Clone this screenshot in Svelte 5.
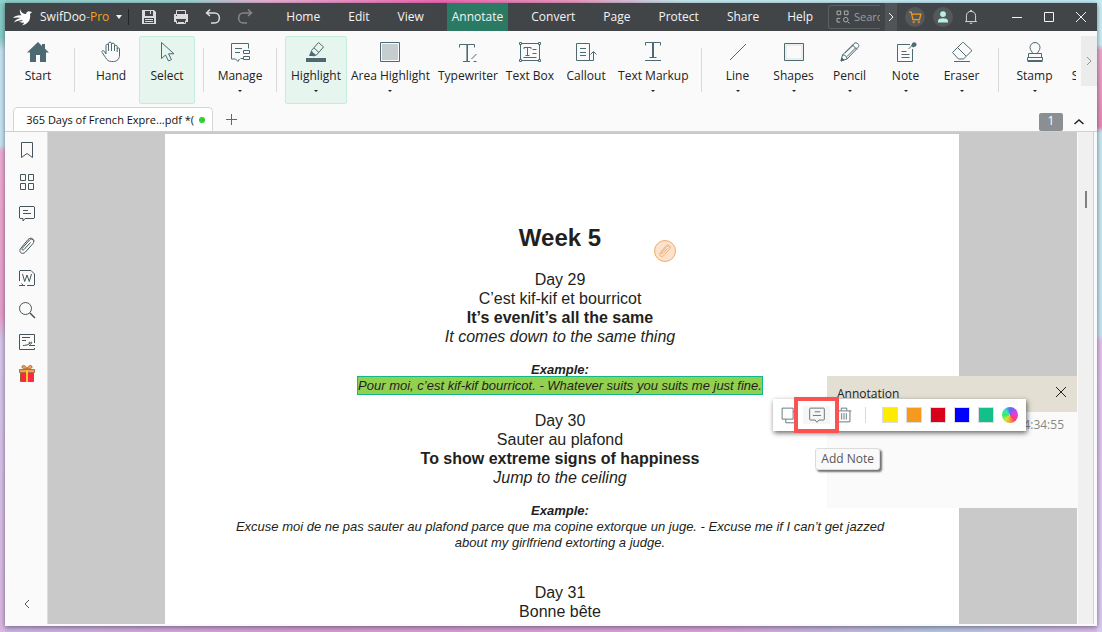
<script lang="ts">
	type Tool = { name: string; icon?: string; menu?: boolean; active?: boolean };

	const menus = ['Home', 'Edit', 'View', 'Annotate', 'Convert', 'Page', 'Protect', 'Share', 'Help'];
	let activeMenu = $state('Annotate');

	const groups: Tool[][] = [
		[{ name: 'Start', icon: 'start' }],
		[
			{ name: 'Hand', icon: 'hand' },
			{ name: 'Select', icon: 'select', active: true }
		],
		[{ name: 'Manage', icon: 'manage', menu: true }],
		[
			{ name: 'Highlight', icon: 'highlight', menu: true, active: true },
			{ name: 'Area Highlight', icon: 'area', menu: true },
			{ name: 'Typewriter', icon: 'typewriter' },
			{ name: 'Text Box', icon: 'textbox' },
			{ name: 'Callout', icon: 'callout' },
			{ name: 'Text Markup', icon: 'markup', menu: true }
		],
		[
			{ name: 'Line', icon: 'line', menu: true },
			{ name: 'Shapes', icon: 'shapes', menu: true },
			{ name: 'Pencil', icon: 'pencil', menu: true },
			{ name: 'Note', icon: 'note', menu: true },
			{ name: 'Eraser', icon: 'eraser', menu: true }
		],
		[
			{ name: 'Stamp', icon: 'stamp', menu: true },
			{ name: 'Sticker' }
		]
	];

	const sidebar = [
		{ name: 'Bookmarks', icon: 'bookmark' },
		{ name: 'Thumbnails', icon: 'grid' },
		{ name: 'Annotations', icon: 'comment' },
		{ name: 'Attachments', icon: 'clip' },
		{ name: 'Word', icon: 'word' },
		{ name: 'Find', icon: 'find' },
		{ name: 'Signatures', icon: 'sign' },
		{ name: 'Gift', icon: 'gift' }
	];

	const swatches = [
		{ name: 'Yellow', color: '#ffeb00' },
		{ name: 'Orange', color: '#f7991c' },
		{ name: 'Red', color: '#d9001b' },
		{ name: 'Blue', color: '#0000ff' },
		{ name: 'Green', color: '#13c08a' }
	];

	// every icon is drawn in a 24 x 24 box
	const icons: Record<string, string> = {
		start:
			'<path fill="currentColor" stroke="none" d="M12 2 1 12.500h3V22h6v-7h4v7h6v-9.500h3L19 8.800V4h-3v2z"/>',
		hand: '<path d="M7 14V5.500c0-1.800 2.500-1.800 2.500 0V11M9.500 6V3.500c0-1.800 3-1.800 3 0V11M12.500 4.500c0-1.800 3-1.800 3 0V11M15.500 6.500c0-1.700 2.700-1.700 2.700 0V12M18.200 9c0-1.500 2.300-1.500 2.300 0v6c0 4-2.500 6.500-6 6.500h-2c-3 0-4.500-1.500-6-4L3.200 12.500c-1-1.800 1-2.500 2-1.300L7 14"/>',
		select: '<path d="M6.500 2.500v16l4-3.500 3 6 3-1.500-3-5.700h5.500z"/>',
		manage:
			'<path d="M20.500 8.500v-5h-17V19h4l2.500 2.500 1.500-2.500M7 8.500h7M7 12.500h5M15.500 10.500h6v3h-6zM15.500 16.500h6v3h-6zM12.500 18.500h3"/>',
		highlight:
			'<path fill="currentColor" stroke="none" d="M2 18h20v4H2zM5 16l2-5 5 4-3 1z"/><path d="m7.500 10.500 7-8 5 4.500-7 8-3.500 1zM10 8l5 4.500"/>',
		area: '<path d="M2.500 2.500h19v19h-19z"/><path fill="#c6cdd0" stroke="none" d="M4 4h16v16H4z"/>',
		typewriter:
			'<path stroke="#93a4a8" d="M10.500 4v17"/><path d="M3.500 7.500v-3h15v3M11.500 4.500v17M7 21.500h7M17.500 21.500h3M15.500 19l5-5"/>',
		textbox:
			'<path d="M3 3.500h18M3 20.500h18M2.500 4v16M21.500 4v16M6 9V7.500h7V9M9.500 7.500v8M7.500 15.500h4M14.500 9.500h4M14.500 13.500h4M5.500 17.500h13"/><path fill="#fff" d="M1.500 2.500h2v2h-2zM20.500 2.500h2v2h-2zM1.500 19.500h2v2h-2zM20.500 19.500h2v2h-2z"/>',
		callout:
			'<path d="M2.500 3.500h13v17h-13zM6 8.500h6M6 12.500h6M6 15.500h6M15.500 20.500h4v-8.500M16.500 14.500l3-3 3 3"/>',
		markup:
			'<path d="M4.500 5.500v-3h15v3M11.500 3v14M12.500 3v14M8.500 17.500h7M4 20.500h16"/>',
		line: '<path d="m4 20 16-16"/>',
		shapes: '<path d="M2.500 3.500h19v17h-19z"/><path stroke="#dde1e2" d="M4 5h16v14H4z"/>',
		pencil:
			'<path d="m3 21 1.500-6L16 3.500c2.500-2.200 6.500 1.500 4 4L9 19zM4.500 15c2.500-.5 4.500 1.500 4.500 4M7 13l9-8.500M9 16.500l9-9M14.500 5l4.500 4.500"/><path fill="currentColor" d="m3 21 .8-3.200L6 20z"/>',
		note: '<path d="M16 4.500H3.500v17h15V9M7.500 11.500h5M7.500 14.500h8M7.500 17.500h8M14.500 9l5-5"/><path fill="currentColor" stroke="none" d="M17 5.500 19 7.500l1.500-.8c1.500 0 2-1 2-2.200s-1-2.200-2.200-2.200-2.300.7-2.300 1.900z"/>',
		eraser:
			'<path d="m2.500 12.500 10-10h1l8 7.500v1l-8 8h-5zM7.500 7.500l8.500 8.500M4 21.500h16"/>',
		stamp:
			'<path d="M9.500 13.500c0-2-2.500-3-2.500-6C7 5 9 2.500 12 2.500s5 2.500 5 5c0 3-2.500 4-2.500 6M5.500 17.500v-4h13v4M4.500 17.500h15v3h-15zM4.500 21.500h15"/>',
		bookmark: '<path d="M6.500 4.500h11v15L12 15.500l-5.500 4z"/>',
		grid: '<path d="M5.500 4.500h5v6h-5zM13.500 4.500h5v6h-5zM5.500 13.500h5v6h-5zM13.500 13.500h5v6h-5z"/>',
		comment: '<path d="M5 4.500h14l.5.500v11l-.5.500h-9L8 19v-2.500H5l-.5-.5V5zM8 8.500h5M8 11.500h8"/>',
		clip: '<path d="m15.500 8.500-6.500 7c-1.300 1.500-2.800 0-1.500-1.500l7-8c2.500-2.300 5.500.5 3.500 3.500l-7.500 8.500c-3.800 3.500-7.500-.5-4.500-4l7-8.500c3-2.800 6-.5 6 2"/>',
		word: '<path d="M4.500 15V5l.5-.5h11l3.500 3.500v11l-.5.500h-7M4 19.500h6M6.500 17.500l2 2M7.500 8l2.200 7.500L12 9l2.300 6.500L16.500 8"/>',
		find: '<circle cx="10.500" cy="10.500" r="6"/><path stroke-width="1.500" d="m15 15 5 5"/>',
		sign: '<path d="M19.500 13V4.500h-15v15h15V18M7 7.500h8M7 10.500h4M8 15.500c2 0 6-.5 7.500-3 .8-1.500 2 .5.500 1.500-2 1-2.500-2-1-2M14 15.500h6"/>',
		gift: '<path fill="#fd2742" stroke="#b0552f" d="M5.500 10.500h13v9h-13z"/><path fill="#f89a55" stroke="#b0713f" d="M4.500 7.500h15v3h-15zM12 7c-1-4-5-4.500-5-2 0 1.500 2 2 5 2 3 0 5-.5 5-2 0-2.500-4-2-5 2"/><path fill="#f9c930" stroke="none" d="M11 8h2v12h-2z"/>',
		copy: '<path d="M4.500 4.500h12v12h-12zM16.500 8.500h4M8.500 16.500v4H20"/>',
		addnote:
			'<path d="M5 4.500h14q1 0 1 1v11q0 1-1 1h-5l-2 2.500-2-2.500H5q-1 0-1-1v-11q0-1 1-1zM9.500 8.500h6M7.500 12.500h9"/>',
		trash:
			'<path d="M5.500 7.500v12h13v-12M4 7.500h16M9 7V4.500h6V7M9.500 10v7M12 10v7M14.500 10v7"/>',
		save: '<path fill="currentColor" stroke="none" fill-rule="evenodd" d="M5 5h12l2 2v12H5zm3 1v5h8V6zm-1 7v5h10v-5z"/><path d="M8 14.500h8M8 16.500h8M13.500 6v3"/>',
		print:
			'<path d="M7.500 9V5.500h9V9M7.500 15.500v3h9v-3M9 17.500h6"/><path fill="currentColor" stroke="none" fill-rule="evenodd" d="M5 9h14v8h-2v-3H7v3H5zm2 1v1h1v-1z"/>',
		undo: '<path stroke-width="1.500" d="M9 4.500 5.500 8 9 11M6 8h7.500c6.500 0 6.500 10 0 10H10"/>',
		redo: '<path stroke-width="1.500" d="m15 4.500 3.500 3.500-3.500 3M18 8h-7.500C4 8 4 18 10.500 18H14"/>',
		scan: '<path d="M5.500 5.500h4v4h-4zM13.500 5.500h4v4h-4zM9 13.500H5.500v4H9"/><circle cx="15" cy="15" r="2.500"/><path d="m17 17 2 2"/>',
		cart: '<path stroke-width="1.500" d="M5 6h2.500l2 9h8l1.500-6.500H8.500"/><circle cx="10.500" cy="18" r="1"/><circle cx="16.500" cy="18" r="1"/>',
		user: '<circle fill="currentColor" stroke="none" cx="12" cy="8.500" r="3.500"/><path fill="currentColor" stroke="none" d="M6 18.500v-2c0-4 12-4 12 0v2z"/>',
		bell: '<path d="M5 17.500h14M6.500 17V10.500c0-7 11-7 11 0V17M11 5c0-1.500 2-1.500 2 0M10.500 19.500h3"/>',
		minimize: '<path d="M7 12.500h10"/>',
		maximize: '<path d="M7.500 7.500h9v9h-9z"/>',
		close: '<path d="m7 7 10 10M17 7 7 17"/>',
		left: '<path d="m14 8-4 4 4 4"/>',
		right: '<path d="m10 8 4 4-4 4"/>',
		rightLarge: '<path stroke-width="1.500" d="m9 6 6 6-6 6"/>',
		up: '<path stroke-width="1.500" d="m7.500 14 4.500-4 4.500 4"/>',
		plus: '<path d="M12.500 7v11M7 12.500h11"/>'
	};
</script>

{#snippet icon(name: string)}
	<svg class="icon" viewBox="0 0 24 24" aria-hidden="true">{@html icons[name]}</svg>
{/snippet}

<div class="desktop">
	<div class="window">
		<header class="titlebar">
			<svg class="logo" viewBox="0 0 20 18" aria-hidden="true">
				<path
					d="M7 1c1 4 4 5 6 5 .5-2 2-3 3.500-2.500L19 4l-2 2c1 6-2 10-8 11.500 1-1 2-2 2-3-2 .5-4 0-5-1 2 0 3-.5 4-1.500C7 12 3 13 1 14.500c1-2.500 4-4 7-4.500C5 9 2 9.500 0 10c2-2 5-3 8.500-2.500C7 5.500 6.500 3 7 1z"
				/>
			</svg>
			<button class="brand">SwifDoo<span>-Pro</span><i class="caret"></i></button>
			<div class="quick">
				<button aria-label="Save">{@render icon('save')}</button>
				<button aria-label="Print">{@render icon('print')}</button>
				<button aria-label="Undo">{@render icon('undo')}</button>
				<button aria-label="Redo" class="dim">{@render icon('redo')}</button>
			</div>
			<nav class="menus">
				{#each menus as m}
					<button class:active={m === activeMenu} onclick={() => (activeMenu = m)}>{m}</button>
				{/each}
			</nav>
			<label class="search">
				{@render icon('scan')}
				<input type="text" placeholder="Search" aria-label="Search tools" />
			</label>
			<button class="more" aria-label="More">{@render icon('right')}</button>
			<div class="account">
				<button class="round cart" aria-label="Cart">{@render icon('cart')}</button>
				<button class="round user" aria-label="Account">{@render icon('user')}</button>
				<button class="bell" aria-label="Notifications">{@render icon('bell')}</button>
			</div>
			<div class="controls">
				<button aria-label="Minimize">{@render icon('minimize')}</button>
				<button aria-label="Maximize">{@render icon('maximize')}</button>
				<button aria-label="Close">{@render icon('close')}</button>
			</div>
		</header>

		<div class="ribbon">
			<div class="tools">
				{#each groups as group}
					<div class="group">
						{#each group as tool}
							<button class="tool" class:active={tool.active}>
								{#if tool.icon}
									{@render icon(tool.icon)}
								{:else}
									<span class="icon"></span>
								{/if}
								<span class="label">{tool.name}</span>
								{#if tool.menu}<i class="caret"></i>{/if}
							</button>
						{/each}
					</div>
				{/each}
			</div>
			<button class="scroll" aria-label="Scroll right">{@render icon('rightLarge')}</button>
		</div>

		<div class="tabs">
			<button class="tab">365 Days of French Expre...pdf *(<i class="dot"></i></button>
			<button class="add" aria-label="New tab">{@render icon('plus')}</button>
			<span class="page-no">1</span>
			<button class="collapse" aria-label="Collapse ribbon">{@render icon('up')}</button>
		</div>

		<div class="body">
			<aside class="sidebar">
				{#each sidebar as item}
					<button aria-label={item.name}>{@render icon(item.icon)}</button>
				{/each}
				<button class="fold" aria-label="Collapse sidebar">{@render icon('left')}</button>
			</aside>

			<main class="viewer">
				<article class="page">
					<h1>Week 5</h1>
					<section>
						<p>Day 29</p>
						<p>C’est kif-kif et bourricot</p>
						<p><b>It’s even/it’s all the same</b></p>
						<p><i>It comes down to the same thing</i></p>
						<div class="example">
							<b>Example:</b>
							<mark>Pour moi, c’est kif-kif bourricot. - Whatever suits you suits me just fine.</mark>
						</div>
					</section>
					<section>
						<p>Day 30</p>
						<p>Sauter au plafond</p>
						<p><b>To show extreme signs of happiness</b></p>
						<p><i>Jump to the ceiling</i></p>
						<div class="example">
							<b>Example:</b>
							<span>
								Excuse moi de ne pas sauter au plafond parce que ma copine extorque un juge. - Excuse me if I
								can’t get jazzed about my girlfriend extorting a judge.
							</span>
						</div>
					</section>
					<section class="last">
						<p>Day 31</p>
						<p>Bonne bête</p>
					</section>
					<button class="attachment" aria-label="Attachment">{@render icon('clip')}</button>
				</article>

				<section class="note">
					<header>
						<span>Annotation</span>
						<button aria-label="Close note">{@render icon('close')}</button>
					</header>
					<time>4:34:55</time>
				</section>

				<div class="popup">
					<button aria-label="Copy">{@render icon('copy')}</button>
					<button class="picked" aria-label="Add Note">{@render icon('addnote')}</button>
					<button aria-label="Delete">{@render icon('trash')}</button>
					<div class="swatches">
						{#each swatches as s}
							<button aria-label={s.name} style="background: {s.color}"></button>
						{/each}
						<button class="wheel" aria-label="More colors"></button>
					</div>
				</div>
				<div class="tooltip" role="tooltip">Add Note</div>
			</main>

			<div class="scrollbar"><div class="thumb"></div></div>
		</div>
	</div>
</div>

<style>
	:global(body) {
		margin: 0;
	}

	* {
		box-sizing: border-box;
	}

	button,
	input {
		border: 0;
		padding: 0;
		background: none;
		color: inherit;
		font: inherit;
	}

	button {
		display: flex;
		align-items: center;
		justify-content: center;
		white-space: nowrap;
	}

	.icon {
		display: block;
		flex: none;
		width: 24px;
		height: 24px;
		fill: none;
		stroke: currentColor;
	}

	.caret {
		border: 2px solid transparent;
		border-top-color: currentColor;
		border-bottom: 0;
	}

	.desktop {
		display: flex;
		height: 100vh;
		min-height: 480px;
		padding: 3px 5px 6px;
		font: 12px/16px 'Open Sans', 'Noto Sans', sans-serif;
		color: #222;
		background:
			linear-gradient(90deg, #8fd3cc, #9fd8d2 17%, #ecb6d6 24%, #f46bb4 40%, #ee9cc0 52%, #c8eef2 62%, #c5eef4)
				top / 100% 3px no-repeat,
			linear-gradient(#85cdc4 6%, #c7e4ee 8%, #c7e4ee 23%, #eeadcf 24%, #e7a0c8 50%, #d5c9ea 54%, #d9b8e0)
				left / 5px 100% no-repeat,
			linear-gradient(#c8f0f4 7%, #e9a9cb 8%, #e58bb5 20%, #c6eaf1 21%, #c6e6f0 53%, #e4bfec 54%, #d8cbef)
				right / 5px 100% no-repeat,
			linear-gradient(90deg, #c9b4de, #d49ccb 30%, #d6a4d2 65%, #b3c7dc 85%, #d9b9e2);
	}

	.window {
		display: flex;
		flex: 1;
		flex-direction: column;
		min-width: 0;
		background: #fafafa;
		box-shadow: 0 1px 5px rgba(40, 30, 70, 0.6);
	}

	.titlebar {
		display: flex;
		flex: none;
		align-items: center;
		height: 28px;
		padding-left: 8px;
		color: #f3f3f3;
		background: #414548;
	}

	.logo {
		flex: none;
		width: 20px;
		height: 18px;
		margin-right: 7px;
		fill: #fff;
	}

	.brand {
		height: 16px;
		padding-right: 6px;
		border-right: 1px solid #222628;
	}

	.brand span {
		color: #f7a01c;
	}

	.brand .caret {
		margin-left: 7px;
		border-width: 4px 3px 0;
	}

	.quick {
		display: flex;
		gap: 8px;
		margin: 0 24px 0 8px;
		color: #dcdcdc;
	}

	.quick .dim {
		color: #85888a;
	}

	.menus {
		display: flex;
		gap: 18px;
		height: 100%;
	}

	.menus button {
		padding: 0 5px;
	}

	.menus .active {
		background: #2b7a63;
	}

	.search {
		display: flex;
		flex: none;
		align-items: center;
		width: 52px;
		height: 24px;
		margin: 0 5px 0 auto;
		padding-left: 3px;
		overflow: hidden;
		border: 1px solid #5b5f62;
		border-right: 0;
		border-radius: 3px 0 0 3px;
		color: #b5b7b8;
		font-size: 11px;
	}

	.search .icon {
		width: 22px;
		height: 22px;
	}

	.search input {
		width: 48px;
	}

	.search input::placeholder {
		color: #9b9d9f;
	}

	.more {
		width: 12px;
		height: 100%;
		background: #505457;
	}

	.account {
		display: flex;
		gap: 8px;
		margin-left: 8px;
	}

	.account button {
		width: 20px;
		height: 20px;
	}

	.account .icon {
		width: 20px;
		height: 20px;
	}

	.round {
		border-radius: 50%;
		background: #54585b;
	}

	.cart {
		color: #f39a16;
	}

	.user {
		color: #b5f3de;
	}

	.controls {
		display: flex;
		margin-left: 20px;
	}

	.controls button {
		width: 32px;
	}

	.ribbon {
		display: flex;
		flex: none;
		padding: 5px 0 2px 5px;
	}

	.tools {
		display: flex;
		flex: 1;
		min-width: 0;
		margin-right: 5px;
		overflow: hidden;
	}

	.group {
		display: flex;
		flex: none;
	}

	.group + .group::before {
		content: '';
		width: 1px;
		height: 44px;
		margin: 12px 8px 0;
		background: #d9d9d9;
	}

	.tool {
		flex: none;
		flex-direction: column;
		justify-content: flex-start;
		min-width: 56px;
		height: 68px;
		padding: 3px 3px 0;
		border: 1px solid transparent;
		border-radius: 2px;
	}

	.tool.active {
		padding: 3px 5px 0;
		border-color: #c3ecdd;
		background: #e7f5ef;
	}

	.tool .icon {
		color: #4d6a72;
	}

	.tool .label {
		margin: 4px 0 6px;
	}

	.scroll {
		width: 16px;
		height: 50px;
		background: #ececec;
		color: #8b9496;
	}

	.scroll .icon {
		width: 16px;
		height: 16px;
	}

	.tabs {
		display: flex;
		flex: none;
		align-items: flex-end;
		height: 26px;
		padding: 0 6px 0 8px;
		border-bottom: 1px solid #cfcfcf;
	}

	.tab {
		justify-content: flex-end;
		width: 200px;
		height: 24px;
		padding-right: 7px;
		gap: 5px;
		border: 1px solid #d4d4d4;
		border-bottom: 0;
		border-radius: 5px 5px 0 0;
		background: #fff;
		color: #111;
		font-size: 11px;
	}

	.dot {
		flex: none;
		width: 6px;
		height: 6px;
		border-radius: 50%;
		background: #2fd02f;
	}

	.add {
		margin-left: 6px;
		color: #666;
	}

	.page-no {
		width: 24px;
		height: 18px;
		margin-left: auto;
		border-radius: 2px;
		background: #8b8f92;
		color: #fff;
		text-align: center;
	}

	.collapse {
		margin-left: 4px;
		height: 18px;
	}

	.body {
		display: flex;
		flex: 1;
		min-height: 0;
		padding: 0 3px 2px 0;
	}

	.sidebar {
		display: flex;
		flex: none;
		flex-direction: column;
		align-items: center;
		gap: 8px;
		width: 43px;
		padding: 6px 0 8px 2px;
		border-right: 1px solid #dcdcdc;
		color: #45565b;
	}

	.fold {
		margin-top: auto;
		color: #555;
	}

	.viewer {
		position: relative;
		display: flex;
		flex: 1;
		justify-content: center;
		min-width: 0;
		padding: 2px 1px 0 0;
		overflow: hidden;
		background: #c9c9c9;
	}

	.page {
		position: relative;
		width: 794px;
		padding: 90px 60px 0 56px;
		background: #fff;
		color: #231f20;
		font: 16px/19px 'Liberation Sans', Arial, sans-serif;
		text-align: center;
	}

	.page h1 {
		margin: 0 0 18px;
		font-size: 24px;
		line-height: 28px;
	}

	.page p {
		margin: 0;
	}

	.page section {
		margin-bottom: 17px;
	}

	.page .last {
		margin-top: 32px;
	}

	.example {
		margin-top: 16px;
		font-size: 13px;
		font-style: italic;
		line-height: 16px;
	}

	.example b {
		display: block;
	}

	mark {
		padding: 1px 0;
		background: #92d050;
		color: inherit;
		outline: 1px solid #12b886;
	}

	/* pin sits on the page itself */
	.attachment {
		position: absolute;
		top: 106px;
		left: calc(50% + 92px);
		width: 22px;
		height: 22px;
		border: 1px solid #f5ab67;
		border-radius: 50%;
		background: #fbe2cf;
		color: #f5a057;
	}

	.attachment .icon {
		width: 18px;
		height: 18px;
	}

	.note {
		position: absolute;
		top: 244px;
		right: 0;
		width: 250px;
		height: 132px;
		background: #fafafa;
	}

	.note header {
		display: flex;
		align-items: center;
		justify-content: space-between;
		height: 36px;
		padding: 0 4px 0 10px;
		background: #e3dfd3;
	}

	.note header button {
		margin-bottom: 4px;
	}

	.note time {
		display: block;
		padding: 5px 13px;
		color: #888;
		text-align: right;
	}

	.popup {
		position: absolute;
		top: 267px;
		right: 51px;
		display: flex;
		align-items: center;
		width: 253px;
		height: 32px;
		padding-left: 5px;
		background: #fff;
		color: #5b7278;
		box-shadow: 1px 2px 5px rgba(0, 0, 0, 0.6);
	}

	.popup .icon {
		width: 22px;
		height: 22px;
	}

	.popup .picked {
		z-index: 1;
		width: 45px;
		height: 36px;
		margin: 0 -6px;
		border: 4px solid #fb5254;
		background: #f6f6f6;
		box-shadow: inset 0 0 0 5px #fff;
	}

	.swatches {
		display: flex;
		align-items: center;
		gap: 8px;
		height: 16px;
		margin-left: 10px;
		padding-left: 16px;
		border-left: 1px solid #dadada;
	}

	.swatches button {
		width: 16px;
		height: 16px;
		border: 1px solid #dcdcdc;
	}

	.swatches .wheel {
		border: 0;
		border-radius: 50%;
		background: conic-gradient(#5a6cf0, #b04df0, #f23ad0, #fb3f6a, #f9a03a, #c8e83a, #3ae85a, #3ae8c0, #5a6cf0);
	}

	.tooltip {
		position: absolute;
		top: 316px;
		right: 197px;
		padding: 2px 5px;
		border: 1px solid #dcdcdc;
		border-radius: 3px;
		background: #f9f9f9;
		color: #575757;
		box-shadow: 2px 2px 2px rgba(0, 0, 0, 0.55);
	}

	.scrollbar {
		display: flex;
		flex: none;
		width: 17px;
		padding: 59px 0 0 7px;
		border-right: 1px solid #d2d2d2;
		border-left: 1px solid #fafafa;
		background: #f0f0f0;
	}

	.thumb {
		width: 2px;
		height: 17px;
		background: #808080;
	}
</style>
